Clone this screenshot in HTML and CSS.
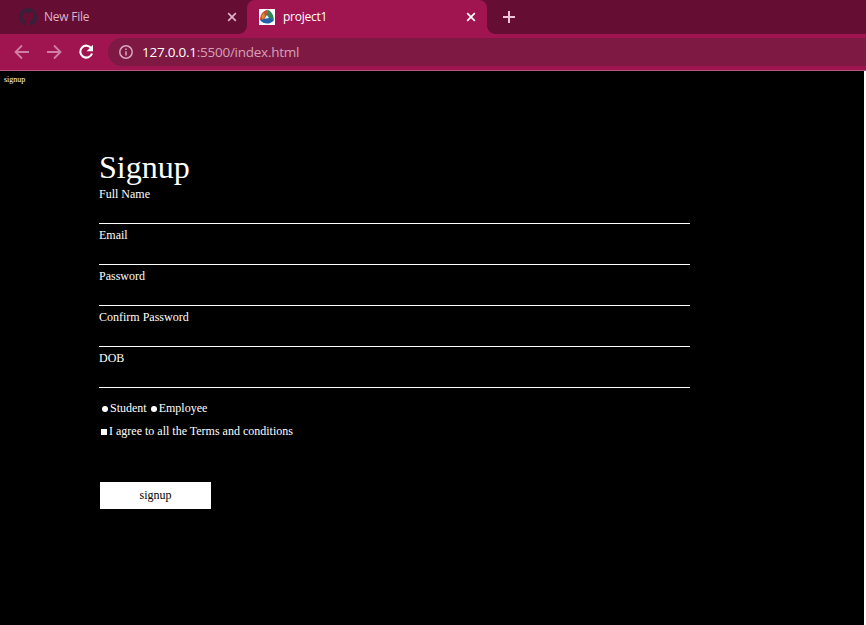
FILE: index.html
```html
<!DOCTYPE html>
<html lang="en">
<head>
<meta charset="utf-8">
<title>project1</title>
<link rel="stylesheet" href="styles.css">
</head>
<body>
<header class="browser">
  <div class="tabs">
    <div class="tab">
      <svg class="favicon github" width="18" height="18" viewBox="0 0 16 16"><path d="M8 0C3.58 0 0 3.58 0 8c0 3.54 2.29 6.53 5.47 7.59.4.07.55-.17.55-.38v-1.49c-2.01.37-2.53-.49-2.69-.94-.09-.23-.48-.94-.82-1.13-.28-.15-.68-.52-.01-.53.63-.01 1.08.58 1.23.82.72 1.21 1.87.87 2.33.66.07-.52.28-.87.51-1.07-1.78-.2-3.64-.89-3.64-3.95 0-.87.31-1.59.82-2.15-.08-.2-.36-1.02.08-2.12 0 0 .67-.21 2.2.82a7.7 7.7 0 0 1 4 0c1.53-1.04 2.2-.82 2.2-.82.44 1.1.16 1.92.08 2.12.51.56.82 1.27.82 2.15 0 3.07-1.87 3.75-3.65 3.95.29.25.54.73.54 1.48v2.2c0 .21.15.46.55.38A8 8 0 0 0 16 8c0-4.42-3.58-8-8-8z"/></svg>
      <span class="tab-title">New File</span>
      <svg class="close" width="10" height="10" viewBox="0 0 10 10"><path d="M1.2 1.2l7.6 7.6M8.8 1.2L1.2 8.8"/></svg>
    </div>
    <div class="tab active">
      <svg class="favicon" width="16" height="16" viewBox="0 0 16 16"><path fill="#fff" d="M0 0h16v16H0z"/><path fill="#c9502b" d="M8.500.8C4 1.500 1 6 1 11l3.500.5L8 6z"/><path fill="#35855a" d="M8.500.8c4.500 2 6.500 6 6.300 10.400L12 13 10 9 7.500 6z"/><path fill="#1f62a8" d="M1 11c3.500 4.500 10 5 13.800.2L10.500 8.500 4.500 10z"/><path fill="#e08b36" d="M2.500 7L5 3.800 6 8l-2.500 2.500z"/><path fill="#e8f2f8" d="M8 6.300l1.800 2.900H6.300z"/></svg>
      <span class="tab-title">project1</span>
      <svg class="close" width="10" height="10" viewBox="0 0 10 10"><path d="M1.200 1.200l7.600 7.600M8.800 1.200L1.200 8.800"/></svg>
    </div>
    <svg class="new-tab" width="12" height="12" viewBox="0 0 12 12"><path d="M6 0v12M0 6h12"/></svg>
  </div>
  <div class="toolbar">
    <svg class="nav-icon" width="16" height="16" viewBox="0 0 16 16"><path d="M15 8H2M8 1.500L1.500 8 8 14.500"/></svg>
    <svg class="nav-icon" width="16" height="16" viewBox="0 0 16 16"><path d="M1 8h13M8 1.500L14.500 8 8 14.500"/></svg>
    <svg class="nav-icon reload" width="16" height="16" viewBox="0 0 16 16"><path d="M13.400 4.500A6 6 0 1 0 14 9.500"/><path class="tip" d="M15 .8v6.400H8.600z"/></svg>
    <div class="address">
      <svg class="info" width="14" height="14" viewBox="0 0 14 14"><circle cx="7" cy="7" r="6.200"/><path d="M7 6.200v4.300M7 3.400v1.500"/></svg>
      <span class="url"><span class="host">127.0.0.1</span>:5500/index.html</span>
    </div>
  </div>
</header>
<main class="page">
  <div class="page-label">signup</div>
  <form class="signup">
    <h1 class="heading">Signup</h1>
    <label class="field">Full Name</label>
    <label class="field">Email</label>
    <label class="field">Password</label>
    <label class="field">Confirm Password</label>
    <label class="field">DOB</label>
    <div class="options">
      <label class="choice"><span class="radio"></span>Student</label>
      <label class="choice"><span class="radio"></span>Employee</label>
    </div>
    <label class="choice terms"><span class="check"></span>I agree to all the Terms and conditions</label>
    <button class="submit" type="button">signup</button>
  </form>
</main>
</body>
</html>
```
FILE: styles.css
```css
* { box-sizing: border-box; }
body {
  margin: 0;
  height: 625px;
  display: flex;
  flex-direction: column;
  overflow: hidden;
  background: #fff;
}
svg { display: block; flex: none; fill: none; }
.github { fill: #36213a; }
.browser { flex: none; font-family: "Open Sans", "Noto Sans", sans-serif; }
.tabs { display: flex; align-items: center; height: 34px; background: #650d32; }
.tab {
  display: flex;
  align-items: center;
  width: 247px;
  height: 34px;
  padding: 0 10px 0 19px;
  font-size: 12px;
  letter-spacing: -0.25px;
  color: #dfb2c8;
}
.tab.active {
  position: relative;
  width: 240px;
  padding: 0 11px 0 12px;
  color: #fff;
  background: #a0154f;
  border-radius: 8px 8px 0 0;
}
.tab.active::before, .tab.active::after {
  content: "";
  position: absolute;
  bottom: 0;
  width: 8px;
  height: 8px;
}
.tab.active::before { left: -8px; background: radial-gradient(circle at 0 0, transparent 7.5px, #a0154f 8px); }
.tab.active::after { right: -8px; background: radial-gradient(circle at 100% 0, transparent 7.5px, #a0154f 8px); }
.tab-title { flex: 1; margin-left: 7px; line-height: 16px; }
.active .tab-title { margin-left: 8px; }
.close { stroke: #dfb2c8; stroke-width: 1.7; }
.active .close { stroke: #fff; }
.new-tab { margin-left: 16px; stroke: #efc4d8; stroke-width: 2; }
.toolbar {
  display: flex;
  align-items: center;
  height: 37px;
  padding: 0 0 1px 14px;
  background: #a0154f;
  border-bottom: 1px solid #b5587f;
}
.nav-icon { margin-right: 16px; stroke: #ce7fa2; stroke-width: 1.8; }
.reload { margin-right: 14px; stroke: #fff; stroke-width: 2.1; }
.tip { fill: #fff; stroke: none; }
.address {
  flex: 1;
  display: flex;
  align-items: center;
  height: 28px;
  padding-left: 11px;
  background: #7d1943;
  border-radius: 14px 0 0 14px;
}
.info { stroke: #dba6bd; stroke-width: 1.5; }
.url { margin-left: 9px; font-size: 13.5px; letter-spacing: -0.25px; line-height: 20px; color: #d6a0b8; white-space: nowrap; }
.host { color: #fff; }
.page {
  flex: 1;
  margin-right: 2px;
  padding: 4px;
  background: #000;
  color: #fff;
  font-family: "Liberation Serif", serif;
}
.page-label { height: 10px; font-size: 8px; line-height: 10px; }
.signup { width: 591px; margin: 65px 0 0 95px; font-size: 12px; }
.heading { height: 37px; margin: 0; font-size: 32px; font-weight: 400; line-height: 34px; }
.field { display: block; height: 41px; line-height: 14px; border-bottom: 1px solid #fff; }
.heading + .field { height: 37px; }
.field + .field { padding-top: 4px; }
.options { display: flex; gap: 4px; margin-top: 13px; padding-left: 3px; }
.choice { display: flex; align-items: center; line-height: 14px; white-space: nowrap; }
.radio { width: 6px; height: 6px; margin: 1px 2px 0 0; border-radius: 50%; background: #fff; }
.check { width: 6px; height: 6px; margin: 2px 2px 0 0; background: #fff; }
.terms { margin-top: 9px; padding-left: 2px; }
.submit {
  display: block;
  width: 111px;
  height: 27px;
  margin: 44px 0 0 1px;
  padding: 0;
  border: 0;
  background: #fff;
  color: #000;
  font: 12px "Liberation Serif", serif;
}
```
